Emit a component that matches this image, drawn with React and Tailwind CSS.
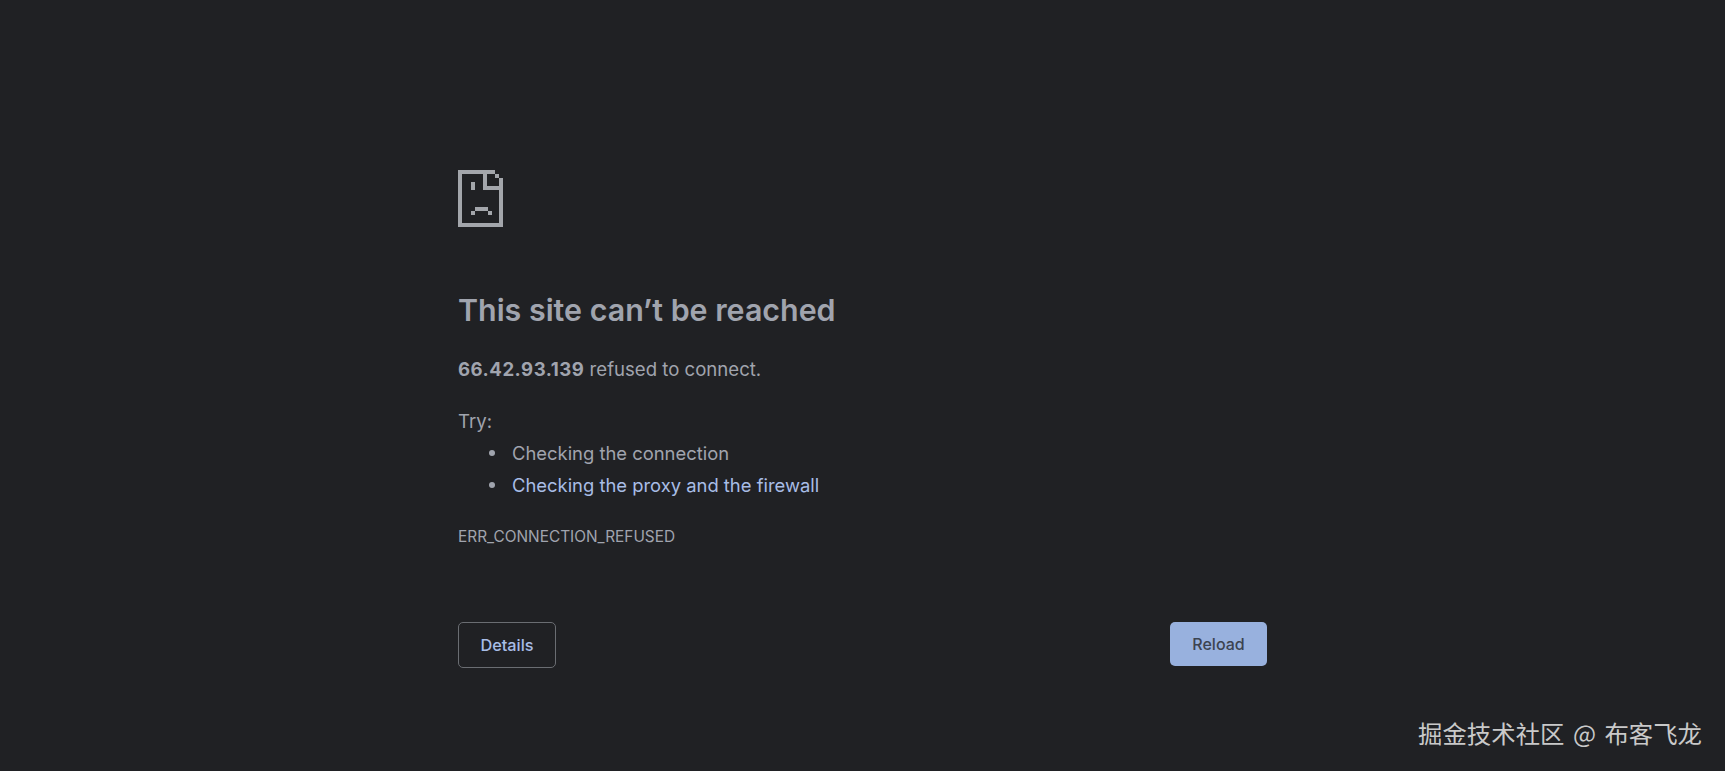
const SadTab = () => (
  <svg width="45" height="57" viewBox="0 0 45 57" fill="#a3a6ab" className="block">
    <rect x="0" y="0" width="37" height="4" />
    <rect x="0" y="0" width="4" height="57" />
    <rect x="0" y="53" width="45" height="4" />
    <rect x="41" y="8" width="4" height="49" />
    <rect x="37" y="4" width="4" height="4" />
    <rect x="25" y="0" width="4" height="20" />
    <rect x="25" y="16" width="20" height="4" />
    <rect x="13" y="12" width="4" height="8" />
    <rect x="17" y="37" width="13" height="4" />
    <rect x="13" y="41" width="4" height="4" />
    <rect x="30" y="41" width="4" height="4" />
  </svg>
);

export default function App() {
  return (
    <div className="relative h-[771px] overflow-hidden bg-[#202124] font-['Inter',sans-serif]">
      <div className="ml-[458px] w-[809px] pt-[170px]">
        <SadTab />

        <h1 className="mt-[64px] text-[30.4px] leading-[38px] font-semibold text-[#a0a4ae]">
          This site can’t be reached
        </h1>

        <p className="mt-[27px] text-[18.6px] leading-[26px] text-[#a0a4ae]">
          <b className="font-bold tracking-[0.5px]">66.42.93.139</b> refused to connect.
        </p>

        <p className="mt-[26px] text-[18.6px] leading-[26px] text-[#a0a4ae]">Try:</p>
        <ul className="mt-[3px] text-[18.4px] leading-[32px] text-[#a0a4ae]">
          <li className="flex items-center">
            <span className="ml-[31px] h-[6px] w-[6px] rounded-full bg-[#a0a4ae]" />
            <span className="ml-[17px]">Checking the connection</span>
          </li>
          <li className="flex items-center">
            <span className="ml-[31px] h-[6px] w-[6px] rounded-full bg-[#a0a4ae]" />
            <span className="ml-[17px] text-[#a8bde6]">Checking the proxy and the firewall</span>
          </li>
        </ul>

        <p className="mt-[26px] text-[15.4px] leading-[20px] text-[#a0a4ae]">ERR_CONNECTION_REFUSED</p>

        <div className="mt-[75px] flex items-start justify-between">
          <button className="h-[46px] w-[98px] rounded-[5px] border border-[#6a6d72] text-[16.3px] font-medium text-[#a8bde6]">
            Details
          </button>
          <button className="h-[44px] w-[97px] rounded-[5px] bg-[#98b1de] text-[16px] font-medium text-[#3c4350]">
            Reload
          </button>
        </div>
      </div>

      <div className="absolute right-[23px] bottom-[22px] font-['Noto_Sans_CJK_SC',sans-serif] text-[24.4px] leading-[32px] [word-spacing:3px] text-[#c9c9c9]">
        掘金技术社区 @ 布客飞龙
      </div>
    </div>
  );
}
